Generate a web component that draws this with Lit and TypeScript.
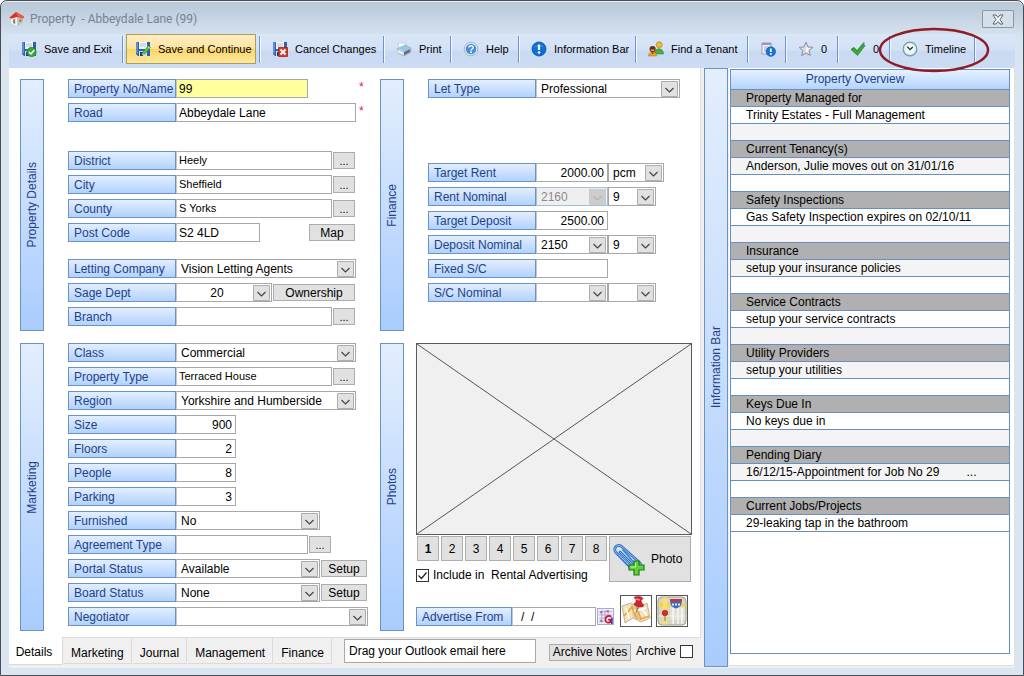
import { LitElement, html, svg, css, nothing } from "lit";
import { customElement } from "lit/decorators.js";
import { classMap } from "lit/directives/class-map.js";

const floppy = svg`
  <path d="M1 1h14v14H3l-2-2z" fill="#2c62ad"/>
  <path d="M1 1h2v12l-2-1z" fill="#5b8fd0"/>
  <path d="M4 1h8v7H4z" fill="#f4f7fb"/>
  <path d="M5 3h6M5 5h6" stroke="#b4bfcc"/>
  <path d="M4 10h8v5H4z" fill="#d7dde6"/>
  <path d="M5 11h3v4H5z" fill="#1d3f78"/>`;

const icons: Record<string, unknown> = {
  saveExit: svg`${floppy}<circle cx="10.500" cy="11" r="4.700" fill="#3aa53a" stroke="#1d7a22" stroke-width=".6"/>
    <path d="M8 11l2 2 3.300-4" fill="none" stroke="#fff" stroke-width="1.500"/>`,
  saveContinue: svg`${floppy}<path d="M7 14l1-3.200 5.500-6 2 1.800L10 12.800z" fill="#5fc04a" stroke="#2b7d2a" stroke-width=".6"/>
    <path d="M7 14l.6-2 1.500 1.300z" fill="#f3d9a5"/><path d="M12.800 5.500l2 1.800" stroke="#e9f6df"/>`,
  cancel: svg`${floppy}<path d="M6.500 6.500h9v9h-9z" fill="#d63a2c" stroke="#a3201a" stroke-width=".8"/>
    <path d="M8.500 8.500l5 5m0-5l-5 5" stroke="#fff" stroke-width="1.800"/>`,
  print: svg`<path d="M2 2h7l2 4-8 2z" fill="#fafcff" stroke="#a9b9ca" stroke-width=".6"/>
    <path d="M1 8l8-4 6 3v4l-7 4-6-3z" fill="#c4cdd6" stroke="#8796a5" stroke-width=".6"/>
    <path d="M3 7l6-2.500 5 2.800-6 3z" fill="#8cc8f2"/><path d="M8 11l6-3v3l-6 3.300z" fill="#5b6f84"/>
    <path d="M1.500 9l6 3v2l-6-2.500z" fill="#edf1f5"/>`,
  help: svg`<circle cx="8" cy="8" r="6.800" fill="#e3ebf5" stroke="#97a8bd" stroke-width=".8"/>
    <circle cx="8" cy="8" r="5.300" fill="#4c8ed8"/>
    <path d="M6 6.600c0-2.600 4.200-2.400 4.200-.1 0 1.500-2.100 1.500-2.100 3" fill="none" stroke="#fff" stroke-width="1.500"/>
    <circle cx="8.100" cy="11.200" r=".9" fill="#fff"/>`,
  info: svg`<circle cx="8" cy="8" r="7" fill="#0f6fd6" stroke="#0a4fa3" stroke-width=".8"/>
    <path d="M3 6a5.500 4 0 0 1 10 0z" fill="#4ba0f2" opacity=".6"/>
    <path d="M8 3.500v5.500" stroke="#fff" stroke-width="2.200"/><circle cx="8" cy="11.500" r="1.300" fill="#fff"/>`,
  tenant: svg`<circle cx="11.200" cy="3.800" r="3" fill="#f0b93a" stroke="#a8761a" stroke-width=".6"/>
    <path d="M6.500 13c0-7 9-7 9 0z" fill="#49ad3f" stroke="#2f8029" stroke-width=".5"/>
    <circle cx="4.600" cy="8" r="3.100" fill="#6b3210"/><path d="M2.500 8.500a2.200 2.200 0 0 0 4.200 0z" fill="#e8b070"/>
    <path d="M.5 15c0-5.500 8.200-5.500 8.200 0z" fill="#e9a81c" stroke="#a56f12" stroke-width=".5"/><path d="M3.300 11.300l1.300 2.500 1.300-2.500z" fill="#c8281e"/>`,
  notes: svg`<path d="M2 2h9v11H2z" fill="#eef2f8" stroke="#8a99b5" stroke-width=".9"/>
    <path d="M2 2h9v2H2z" fill="#a48fbf"/><path d="M4 6h5M4 8h3M4 10h2" stroke="#9fb0c8"/>
    <circle cx="10.800" cy="10.600" r="4.800" fill="#1673d4" stroke="#0a4fa3" stroke-width=".5"/>
    <path d="M10.800 7.500v3.500" stroke="#fff" stroke-width="1.800"/><circle cx="10.800" cy="13" r="1" fill="#fff"/>`,
  star: svg`<path d="M8 1.200l2 4.700 5 .4-3.800 3.300 1.200 5L8 12l-4.400 2.600 1.200-5L1 6.300l5-.4z" fill="#d9dbe2" stroke="#8d919c" stroke-width="1"/>
    <path d="M8 4l1.200 3 2.800.2-2.200 1.800.6 3L8 10.500z" fill="#f7f8fa"/>`,
  tick: svg`<path d="M1 8l3-2 3 3 6.500-8L15 2 7.500 12z" fill="#7b8a92"/>
    <path d="M1 8.500l3-1.800 3 3.300 6.500-7 1.500 1.800L7.500 14.500z" fill="#35ad2e" stroke="#1f7c22" stroke-width=".6"/>`,
  clock: svg`<circle cx="8" cy="8" r="6.800" fill="#d6ebe9" stroke="#7d96ab" stroke-width="1.200"/>
    <circle cx="8" cy="8" r="5" fill="#eefaf6"/>
    <path d="M5.300 5.600L8 8.600l2.800-2.600" fill="none" stroke="#27343f" stroke-width="1.400"/>`,
  house: svg`<path d="M2 7l6-1.500V15l-6-3z" fill="#f7f4f0"/><path d="M8 5.500l6 1V12l-6 3z" fill="#c7c2bd"/>
    <path d="M.5 6.500L7 1l8 4.500-1 2-6-1.500-6 1.800z" fill="#d9301f"/><path d="M7 1l8 4.500-1 2-5.500-2z" fill="#ef5a41"/>
    <path d="M4 8.500l2.200-.4v5l-2.200-1z" fill="#8b8178"/><path d="M10.500 8.500l1.800 0v2l-1.800.6z" fill="#6e6862"/>`,
  calendar: svg`<path d="M.5.5h15v15H.5z" fill="#eef0fb" stroke="#a9a9c9"/>
    <path d="M2 3.500h12M2 6.500h12M2 9.500h6M2 12.500h5M4.500 2v12M7.500 2v7M10.500 2v4" stroke="#9b9be0" stroke-width=".8"/>
    <path d="M3 3h2v2H3zM9 2h2v2H9zM3 11h2v2H3z" fill="#cf5b86"/>
    <path d="M13.500 8.300c-3-2.200-6 .1-5.600 3 .4 2.600 3 3 4.600 2V11h-2" fill="none" stroke="#d4142a" stroke-width="1.700"/>
    <path d="M14 9v6" stroke="#1d2aa6" stroke-width="1.400"/>`,
};

const icon = (name: string) => html`<svg class="icon" viewBox="0 0 16 16" aria-hidden="true">${icons[name]}</svg>`;

type Control =
  | { kind: "text"; value?: string; size: string; cls?: string }
  | { kind: "select"; value?: string; size: string; cls?: string; disabled?: boolean }
  | { kind: "button"; text: string; cls: string };

interface Row { label: string; before?: string; required?: string; controls: Control[]; }

const text = (size: string, value = "", cls = ""): Control => ({ kind: "text", size, value, cls });
const pick = (size: string, value = "", cls = "", disabled = false): Control => ({ kind: "select", size, value, cls, disabled });
const push = (label: string, cls = "btn-dots"): Control => ({ kind: "button", text: label, cls });

const detailRows: Row[] = [
  { label: "Property No/Name", required: "far", controls: [text("w132", "99", "key")] },
  { label: "Road", required: "near", controls: [text("w180", "Abbeydale Lane")] },
  { label: "District", before: "before-24", controls: [text("w156", "Heely", "small"), push("...")] },
  { label: "City", controls: [text("w156", "Sheffield", "small"), push("...")] },
  { label: "County", controls: [text("w156", "S Yorks", "small"), push("...")] },
  { label: "Post Code", controls: [text("w84", "S2 4LD"), push("Map", "btn-map")] },
  { label: "Letting Company", before: "before-12", controls: [pick("w180", "Vision Letting Agents")] },
  { label: "Sage Dept", controls: [pick("w96", "20", "mid"), push("Ownership", "btn-wide")] },
  { label: "Branch", controls: [text("w156"), push("...")] },
];

const marketingRows: Row[] = [
  { label: "Class", controls: [pick("w180", "Commercial")] },
  { label: "Property Type", controls: [text("w156", "Terraced House", "small"), push("...")] },
  { label: "Region", controls: [pick("w180", "Yorkshire and Humberside")] },
  { label: "Size", controls: [text("w60", "900", "num")] },
  { label: "Floors", controls: [text("w60", "2", "num")] },
  { label: "People", controls: [text("w60", "8", "num")] },
  { label: "Parking", controls: [text("w60", "3", "num")] },
  { label: "Furnished", controls: [pick("w144", "No")] },
  { label: "Agreement Type", controls: [text("w132"), push("...")] },
  { label: "Portal Status", controls: [pick("w144", "Available"), push("Setup", "btn-setup")] },
  { label: "Board Status", controls: [pick("w144", "None"), push("Setup", "btn-setup")] },
  { label: "Negotiator", controls: [pick("w192")] },
];

const financeRows: Row[] = [
  { label: "Let Type", controls: [pick("w144", "Professional")] },
  { label: "Target Rent", before: "before-60", controls: [text("w72", "2000.00", "num"), pick("w56", "pcm")] },
  { label: "Rent Nominal", controls: [pick("w72", "2160", "", true), pick("w48", "9")] },
  { label: "Target Deposit", controls: [text("w72", "2500.00", "num")] },
  { label: "Deposit Nominal", controls: [pick("w72", "2150"), pick("w48", "9")] },
  { label: "Fixed S/C", controls: [text("w72")] },
  { label: "S/C Nominal", controls: [pick("w72"), pick("w48")] },
];

const overview: [string, string, string?][] = [
  ["Property Managed for", "Trinity Estates - Full Management"],
  ["Current Tenancy(s)", "Anderson, Julie moves out on 31/01/16"],
  ["Safety Inspections", "Gas Safety Inspection expires on 02/10/11"],
  ["Insurance", "setup your insurance policies"],
  ["Service Contracts", "setup your service contracts"],
  ["Utility Providers", "setup your utilities"],
  ["Keys Due In", "No keys due in"],
  ["Pending Diary", "16/12/15-Appointment for Job No 29", "..."],
  ["Current Jobs/Projects", "29-leaking tap in the bathroom"],
];

const tools: [string, string][] = [
  ["saveExit", "Save and Exit"],
  ["saveContinue", "Save and Continue"],
  ["cancel", "Cancel Changes"],
  ["print", "Print"],
  ["help", "Help"],
  ["info", "Information Bar"],
  ["tenant", "Find a Tenant"],
  ["notes", ""],
  ["star", "0"],
  ["tick", "0"],
  ["clock", "Timeline"],
];

@customElement("app-root")
export class AppRoot extends LitElement {
  static styles = css`
    :host { display: block; font: 12px/16px "Liberation Sans", Arial, sans-serif; color: #000; }
    *, *::before, *::after { box-sizing: border-box; }
    button, input, select { font: inherit; color: inherit; margin: 0; border-radius: 0; }
    button { padding: 0; }

    .window {
      display: flex; flex-direction: column; min-height: 100vh; padding: 0 8px 7px;
      border: 1px solid #4a4c54; border-radius: 7px 7px 0 0;
      background: linear-gradient(#b7c7d6, #d6e3f1 36px, #dae5f2 80px);
      box-shadow: inset 0 1px #e8eff6;
    }
    .titlebar { display: flex; align-items: center; height: 33px; padding: 3px 1px 0 0; }
    .title { flex: 1; margin: 0 0 0 5px; font: 400 12px/16px Roboto, "Open Sans", sans-serif; white-space: pre; color: #76838f; }
    .icon { width: 16px; height: 16px; flex: none; display: block; }
    .close { width: 32px; height: 18px; display: grid; place-items: center; background: #d3dfeb; border: 1px solid #8c98a6; border-radius: 1px; }
    .close svg { width: 14px; height: 11px; }

    .toolbar {
      display: grid; grid-template-columns: 114px 137px 124px 67px 68px 117px 112px 38px 52px 52px 85px;
      height: 34px; padding: 0 0 4px;
      background: linear-gradient(#d9e6f7, #d3e1f6 48%, #c8d9f1 50%, #cddcf3);
    }
    .tool-cell { position: relative; display: flex; padding: 0 3px; border-right: 1px solid #6d94cd; box-shadow: 1px 0 #f2f7fd; align-self: center; height: 27px; align-items: center; }
    .tool { display: flex; align-items: center; flex: 1; height: 30px; padding: 0 0 0 8px; gap: 7px; border: 1px solid transparent; background: none; font-size: 11px; white-space: nowrap; }
    .tool.active { border-color: #b09a5c; background: linear-gradient(#fdeec3, #fde3a0 48%, #fbd467 50%, #fde9a0); }
    .highlight { position: absolute; left: -12px; top: -9px; width: 112px; height: 46px; pointer-events: none; }

    .body { flex: 1; display: grid; grid-template-columns: minmax(695px, 695fr) minmax(0, 311fr); background: #f0f0f0; }
    .main { display: flex; flex-direction: column; margin-right: 3px; }
    .form {
      flex: 1; display: grid; grid-template-columns: 24px 336px 24px 1fr; row-gap: 12px; align-content: start;
      padding: 11px 8px 6px 11px; background: #fff; border-right: 1px solid #dcdcdc; border-bottom: 1px solid #dcdcdc;
    }
    .bar { display: grid; place-items: center; border: 1px solid #6a93c3; background: linear-gradient(#e3eefd, #a9ccfd); color: #1f4288; }
    .bar span { writing-mode: vertical-rl; transform: rotate(180deg); white-space: nowrap; }
    .rows { display: flex; flex-direction: column; gap: 5px; padding: 0 0 5px 24px; }
    .row { display: flex; height: 19px; }
    .before-12 { margin-top: 12px; }
    .before-24 { margin-top: 24px; }
    .before-60 { margin-top: 60px; }

    .tag { flex: none; width: 108px; padding: 0 0 0 5px; line-height: 18px; border: 1px solid #6a93c3; background: linear-gradient(#e2eeff, #b2d2fd); color: #1f4288; white-space: nowrap; overflow: hidden; }
    .box, .drop { flex: none; height: 19px; border: 1px solid #a8a8a8; background-color: #fff; outline: none; }
    .box { padding: 1px 3px 0 2px; }
    .box.small { padding: 0 3px 1px 2px; }
    .tag + .box, .tag + .drop { border-left-color: #c2c8d0; }
    .drop {
      appearance: none; padding: 1px 18px 0 4px; text-overflow: clip;
      background-image: url("data:image/svg+xml,%3Csvg xmlns='http://www.w3.org/2000/svg' width='17' height='16'%3E%3Cpath d='M.5.5h16v15H.5z' fill='%23e1e1e1' stroke='%23adadad'/%3E%3Cpath d='M4.500 7l4 4 4-4' fill='none' stroke='%23444' stroke-width='1.200'/%3E%3C/svg%3E");
      background-repeat: no-repeat; background-position: right 1px top 1px;
    }
    .drop:disabled {
      background-color: #efefef; color: #8b8b8b; opacity: 1; border-color: #a9bcd6;
      background-image: url("data:image/svg+xml,%3Csvg xmlns='http://www.w3.org/2000/svg' width='17' height='16'%3E%3Cpath d='M0 0h17v16H0z' fill='%23cccccc'/%3E%3Cpath d='M4.500 7l4 4 4-4' fill='none' stroke='%23a4a4a4'/%3E%3C/svg%3E");
    }
    .key { background-color: #ffff9c; }
    .small { font-size: 11px; }
    .num { text-align: right; }
    .mid { text-align-last: center; }
    .w48 { width: 48px; } .w56 { width: 56px; } .w60 { width: 60px; } .w72 { width: 72px; }
    .w84 { width: 84px; } .w96 { width: 96px; } .w132 { width: 132px; } .w144 { width: 144px; }
    .w156 { width: 156px; } .w180 { width: 180px; } .w192 { width: 192px; }

    .btn { flex: none; border: 1px solid #adadad; background: #e1e1e1; white-space: nowrap; }
    .row .btn { align-self: center; height: 17px; line-height: 16px; margin-left: 1px; }
    .row .btn-dots { width: 22px; font-size: 11px; line-height: 17px; }
    .row .btn-map { width: 46px; margin-left: 49px; }
    .btn-setup { width: 46px; }
    .btn-wide { width: 82px; }
    .star { color: #d8213b; line-height: 16px; }
    .star.far { margin-left: 51px; }
    .star.near { margin-left: 3px; }

    .photos { padding-left: 12px; }
    .placeholder { display: block; width: 100%; height: 192px; background: #f0f0f0; border: 1px solid #5a5a5a; }
    .photo-tools { display: flex; align-items: flex-start; gap: 2px; padding: 1px 1px 0 0; }
    .pages { display: flex; gap: 2px; padding-left: 1px; }
    .page { flex: 1; height: 25px; }
    .page.current { font-weight: 700; }
    .left-stack { flex: 1; display: flex; flex-direction: column; gap: 6px; }
    .check { display: flex; align-items: center; gap: 4px; white-space: pre; }
    .tick { appearance: none; flex: none; width: 13px; height: 13px; border: 1px solid #333; background: #fff; }
    .tick:checked { background: #fff url("data:image/svg+xml,%3Csvg xmlns='http://www.w3.org/2000/svg' width='11' height='11'%3E%3Cpath d='M1.500 5.500l3 3 5-6' fill='none' stroke='%23222' stroke-width='1.200'/%3E%3C/svg%3E"); }
    .add-photo { display: flex; align-items: center; width: 82px; height: 46px; padding-left: 2px; gap: 5px; }
    .add-photo svg { width: 34px; height: 38px; }
    .advert { display: flex; align-items: flex-end; margin-top: 12px; }
    .advert .row { align-items: center; margin-bottom: 1px; }
    .advert .tag { width: 96px; height: 19px; }
    .advert .box { padding-left: 8px; white-space: pre; }
    .icon-btn { display: block; border: 0; background: none; }
    .icon-btn .icon { width: 17px; height: 17px; }
    .advert .row .icon-btn { margin-left: 1px; }
    .map-btn { width: 32px; height: 32px; border: 1px solid #555; background: #fff; }
    .map-btn svg { display: block; width: 30px; height: 30px; }
    .map-btn + .map-btn { margin-left: 4px; }
    .advert .row + .map-btn { margin-left: 6px; }

    .footer { display: flex; align-items: flex-start; height: 30px; }
    .tabs { display: flex; gap: 1px; width: 323px; }
    .tab { flex: auto; height: 26px; padding: 5px 4px 0; border: 1px solid #dadada; border-top: 0; border-left: 0; background: #f0f0f0; line-height: 20px; }
    .tab.current { flex: none; width: 54px; height: 28px; margin-top: -1px; padding: 2px 3px 0 0; background: #fff; }
    .drag { width: 192px; height: 24px; margin: 1px 0 0 12px; padding: 0 4px 1px; border: 1px solid #a8a8a8; background: #fff; }
    .notes { width: 82px; height: 17px; line-height: 15px; margin: 6px 5px 0 13px; }
    .archive { margin-top: 5px; }

    .side { display: grid; grid-template-columns: 24px 1fr; column-gap: 1px; }
    .side .bar { margin: 0 0 1px; }
    .panel { padding: 1px 4px 11px 1px; background: #fff; border: 1px solid #e0e0e0; border-width: 0 1px 1px 0; margin-bottom: 2px; display: flex; }
    .overview-frame { flex: 1; min-width: 0; border: 1px solid #6490c4; }
    .overview { width: 100%; border-collapse: collapse; }
    .overview th, .overview td { height: 17px; padding: 0 0 0 15px; line-height: 16px; text-align: left; font-weight: 400; border-bottom: 1px solid #6490c4; white-space: nowrap; }
    .overview thead th { height: 19px; padding: 0 30px 0 0; line-height: 18px; text-align: center; background: linear-gradient(#e6f1ff, #b4d4fd); color: #1f4288; }
    .overview tbody th { background: #b0b0b0; }
    .overview tbody tr:nth-child(odd) td { background: #f4f4f4; }
    .more { margin-left: 27px; }
  `;

  private control(c: Control, id: string, label: string) {
    if (c.kind === "button") {
      return html`<button type="button" class="btn ${c.cls}">${c.text}</button>`;
    }
    if (c.kind === "select") {
      return html`<select id=${id} class="drop ${c.size} ${c.cls ?? ""}" aria-label=${label} ?disabled=${c.disabled}>
        <option>${c.value}</option></select>`;
    }
    return html`<input id=${id} type="text" class="box ${c.size} ${c.cls ?? ""}" aria-label=${label} .value=${c.value ?? ""}>`;
  }

  private rows(group: string, rows: Row[]) {
    return html`<div class="rows">${rows.map((r, i) => html`
      <div class="row ${r.before ?? ""}">
        <label class="tag" for="${group}-${i}-0">${r.label}</label>${r.controls.map((c, j) => this.control(c, `${group}-${i}-${j}`, r.label))}
        ${r.required ? html`<span class="star ${r.required}">*</span>` : nothing}
      </div>`)}</div>`;
  }

  private photos() {
    return html`<div class="photos">
      <svg class="placeholder" viewBox="0 0 100 100" preserveAspectRatio="none" aria-hidden="true">
        <path d="M0 0L100 100M100 0L0 100" stroke="#555" stroke-width="1" vector-effect="non-scaling-stroke"/>
      </svg>
      <div class="photo-tools">
        <div class="left-stack">
          <div class="pages">${[1, 2, 3, 4, 5, 6, 7, 8].map((n) => html`
            <button type="button" class="btn page ${classMap({ current: n === 1 })}">${n}</button>`)}</div>
          <label class="check"><input type="checkbox" class="tick" checked>Include in  Rental Advertising</label>
        </div>
        <button type="button" class="btn add-photo">
          <svg viewBox="0 0 34 38" aria-hidden="true">
            <g fill="none" stroke-linecap="round" stroke-linejoin="round">
              <path d="M19 28L3.500 12C1 8 5 4 9 6L27 22c4 4 1 9-3 6L8 12" stroke="#2b6cc2" stroke-width="2.600"/>
              <path d="M19 28L3.500 12C1 8 5 4 9 6L27 22c4 4 1 9-3 6L8 12" stroke="#8fc4f8" stroke-width="1"/>
              <path d="M7 15l15 15c4 2 6-1 3-4L11 10" stroke="#3c82d8" stroke-width="1.800"/>
              <path d="M7 15l15 15" stroke="#b9dcfc" stroke-width=".7"/>
            </g>
            <path d="M22 21h5v4h5v5h-5v5h-5v-5h-5v-5h5z" fill="#5fd23a" stroke="#1c7d1c" stroke-width="1.200"/>
            <path d="M23.500 23v4h-5" fill="none" stroke="#c9f5ae"/>
          </svg>
          <span>Photo</span>
        </button>
      </div>
      <div class="advert">
        <div class="row">
          <label class="tag" for="advertise">Advertise From</label>
          <input id="advertise" type="text" class="box w84" .value=${"/  /"}>
          <button type="button" class="icon-btn" aria-label="Calendar">${icon("calendar")}</button>
        </div>
        <button type="button" class="map-btn" aria-label="Pin on map">
          <svg viewBox="0 0 30 30" aria-hidden="true">
            <path d="M1 10l9-3 8 4 8-4 3 15-9 4-8-4-8 5z" fill="#efe3c0" stroke="#b5a377" stroke-width=".8"/>
            <path d="M10 7l2 15 8 4-2-15z" fill="#d9cba1"/>
            <path d="M3 20l8-9 5 12M15 11l5 12 8-3" fill="none" stroke="#f0a02c" stroke-width="1.600"/>
            <path d="M5 12l3 11M21 13l5 7M13 15l12-3" stroke="#fff" stroke-width="1.300"/>
            <path d="M18 10l-3 6" stroke="#777" stroke-width="1.200"/>
            <path d="M13 1.500c3-2 8-1 9 1l-2 2 1 3c2 1 2 2 1 3-3 1-7 0-9-2 0-1 1-2 2-2l0-3z" fill="#d8202c" stroke="#8e1019" stroke-width=".6"/>
            <path d="M15 3l4 1" stroke="#f58a8a" stroke-width="1.300"/>
          </svg>
        </button>
        <button type="button" class="map-btn" aria-label="Street map">
          <svg viewBox="0 0 30 30" aria-hidden="true">
            <rect x="1" y="1" width="28" height="28" rx="4" fill="#d9d4c6" stroke="#a39e90"/>
            <path d="M13 10h15v14H13z" fill="#e3dfd2"/><path d="M1.500 7h27v4h-27z" fill="#f5d640"/><path d="M6 1.500h4v27H6z" fill="#f7e070"/>
            <path d="M16 12v16M21 12v16M25 12v16" stroke="#fff" stroke-width="1.200"/><path d="M1.500 20h27" stroke="#f3f1ea"/>
            <path d="M13 3h12c1 6-1 8-6 10-5-2-7-4-6-10z" fill="#3d69b8" stroke="#e8eef7" stroke-width=".8"/>
            <path d="M13 3h12v2.500H13z" fill="#c93236"/><path d="M15 8.500h8" stroke="#dfe8f6" stroke-width="2" stroke-dasharray="2 1"/>
            <path d="M8 18v7" stroke="#777"/><circle cx="8" cy="17" r="2.800" fill="#dc2a22" stroke="#8e1019" stroke-width=".5"/>
          </svg>
        </button>
      </div>
    </div>`;
  }

  render() {
    return html`<div class="window">
      <header class="titlebar">
        ${icon("house")}
        <h1 class="title">Property  - Abbeydale Lane (99)</h1>
        <button type="button" class="close" aria-label="Close">
          <svg viewBox="0 0 14 11" aria-hidden="true">
            <path d="M2 1h3l2 2.500L9 1h3L9 5.500 12 10H9L7 7.500 5 10H2l3-4.500z" fill="#fff" stroke="#59626d"/>
          </svg>
        </button>
      </header>
      <nav class="toolbar">${tools.map(([name, label]) => html`
        <div class="tool-cell">
          <button type="button" class="tool ${classMap({ active: name === "saveContinue" })}" aria-label=${label || "Notes"}>
            ${icon(name)}${label ? html`<span>${label}</span>` : nothing}
          </button>
          ${name === "clock" ? html`<svg class="highlight" viewBox="0 0 112 46" aria-hidden="true">
            <ellipse cx="56" cy="23" rx="54" ry="21" fill="none" stroke="#8f1c26" stroke-width="2.500"/></svg>` : nothing}
        </div>`)}</nav>
      <div class="body">
        <main class="main">
          <div class="form">
            <div class="bar"><span>Property Details</span></div>
            ${this.rows("details", detailRows)}
            <div class="bar"><span>Finance</span></div>
            ${this.rows("finance", financeRows)}
            <div class="bar"><span>Marketing</span></div>
            ${this.rows("marketing", marketingRows)}
            <div class="bar"><span>Photos</span></div>
            ${this.photos()}
          </div>
          <footer class="footer">
            <div class="tabs">${["Details", "Marketing", "Journal", "Management", "Finance"].map((t) => html`
              <button type="button" class="tab ${classMap({ current: t === "Details" })}">${t}</button>`)}</div>
            <input type="text" class="drag" aria-label="Outlook email" .value=${"Drag your Outlook email here"}>
            <button type="button" class="btn notes">Archive Notes</button>
            <label class="check archive">Archive<input type="checkbox" class="tick"></label>
          </footer>
        </main>
        <aside class="side">
          <div class="bar"><span>Information Bar</span></div>
          <div class="panel">
            <div class="overview-frame">
              <table class="overview">
                <thead><tr><th scope="col">Property Overview</th></tr></thead>
                <tbody>${overview.map(([head, value, more], i) => html`
                  <tr><th scope="row">${head}</th></tr>
                  <tr><td>${value}${more ? html`<span class="more">${more}</span>` : nothing}</td></tr>
                  ${i < overview.length - 1 ? html`<tr><td></td></tr>` : nothing}`)}
                </tbody>
              </table>
            </div>
          </div>
        </aside>
      </div>
    </div>`;
  }
}
